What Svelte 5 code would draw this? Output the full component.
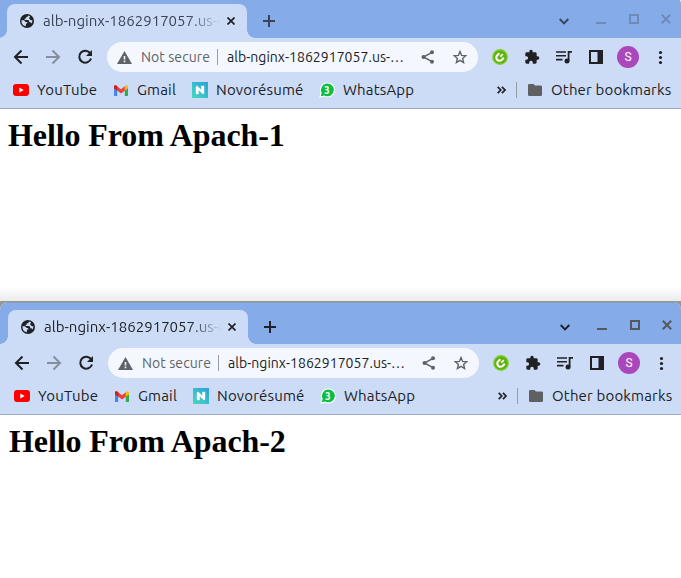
<script>
  const windows = [
    { heading: 'Hello From Apach-1', active: false },
    { heading: 'Hello From Apach-2', active: true }
  ];
</script>

{#snippet browser(w)}
  <section class="window" class:active={w.active}>
    <div class="frame">
      <header class="strip">
        <div class="tab">
          <svg class="globe" width="14" height="14" viewBox="0 0 14 14"><circle cx="7" cy="7" r="7" fill="#202124"/><path d="M8.300 1.600 7 3.200H5.800v1.600H4.600v1.300h3.700l.9 1v1.100h1.300l1 1.300A5.500 5.500 0 0 0 12.400 6.500L10.600 6 9.300 4.700V3.500l.9-1zM1.500 6.300H4l1.700 1.600h1.500v1.700H6l-.2 2.700A5.500 5.500 0 0 1 1.500 6.300z" fill="#ccdcf6"/></svg>
          <span class="title">alb-nginx-1862917057.us-e</span>
          <svg class="tabclose" width="8" height="8" viewBox="0 0 8 8"><path d="M.5.5l7 7m0-7l-7 7" stroke="#202124" stroke-width="1.7"/></svg>
        </div>
        <svg class="plus" width="12" height="12" viewBox="0 0 12 12"><path d="M6 0v12M0 6h12" stroke="currentColor" stroke-width="2"/></svg>
        <svg class="chevron" width="10" height="7" viewBox="0 0 10 7"><path d="M.7 1l4.3 4.3L9.3 1" fill="none" stroke="currentColor" stroke-width="1.9"/></svg>
        <div class="controls">
          <svg width="10" height="12" viewBox="0 0 10 12"><path d="M0 10h10" stroke="currentColor" stroke-width="2"/></svg>
          <svg width="10" height="12" viewBox="0 0 10 12"><path d="M1 2h8v8H1z" fill="none" stroke="currentColor" stroke-width="2"/></svg>
          <svg width="10" height="12" viewBox="0 0 10 12"><path d="M.8 1.8l8.4 8.4m0-8.4L.8 10.2" stroke="currentColor" stroke-width="2"/></svg>
        </div>
      </header>

      <div class="toolbar">
        <svg width="16" height="16" viewBox="0 0 16 16"><path d="M15 8H2m6.500-6.500L2 8l6.500 6.500" fill="none" stroke="#202124" stroke-width="2"/></svg>
        <svg width="16" height="16" viewBox="0 0 16 16"><path d="M1 8h13M7.500 1.500 14 8l-6.500 6.500" fill="none" stroke="#858e9f" stroke-width="2"/></svg>
        <svg width="16" height="16" viewBox="0 0 16 16"><path d="M13.300 4.400A6 6 0 1 0 14 9.500" fill="none" stroke="#202124" stroke-width="2"/><path d="M15 1v6H9z" fill="#202124"/></svg>
        <div class="omnibox">
          <svg class="warn" width="15" height="13" viewBox="0 0 15 13"><path d="M7.500 0 15 13H0z" fill="#5f6368"/><path d="M7.500 5v3.500M7.500 9.500v1.800" stroke="#f4f8fe" stroke-width="1.600"/></svg>
          <span class="secure">Not secure</span>
          <i class="rule"></i>
          <span class="url">alb-nginx-1862917057.us-…</span>
          <svg class="share" width="14" height="14" viewBox="0 0 14 14"><g fill="#5f6368"><circle cx="2.500" cy="7" r="2"/><circle cx="11" cy="2.300" r="2"/><circle cx="11" cy="11.700" r="2"/></g><path d="M11 2.300 2.500 7l8.500 4.700" fill="none" stroke="#5f6368" stroke-width="1.500"/></svg>
          <svg class="star" width="14" height="14" viewBox="0 0 14 14"><path d="M7 1.500l1.600 3.900 4.200.3-3.200 2.700 1 4.100L7 10.300l-3.600 2.200 1-4.100-3.200-2.700 4.200-.3z" fill="none" stroke="#5f6368" stroke-width="1.400"/></svg>
        </div>
        <div class="actions">
          <svg width="16" height="16" viewBox="0 0 16 16"><circle cx="8" cy="8" r="7.900" fill="#7bd02b"/><circle cx="8" cy="8" r="6.600" fill="#5db20c"/><path d="M7.300 4.300 5.300 6.300a3 3 0 0 0 4.300 4.600l2.200-2.200" fill="none" stroke="#fff" stroke-width="2.100"/><path d="M8.300 7.700 10.800 5.200" stroke="#fff" stroke-width="1.800"/></svg>
          <svg width="16" height="16" viewBox="0 0 24 24"><path d="M20.500 11H19V7c0-1.100-.9-2-2-2h-4V3.500a2.500 2.500 0 0 0-5 0V5H4c-1.100 0-2 .9-2 2v3.800h1.500a2.700 2.700 0 0 1 0 5.400H2V20c0 1.100.9 2 2 2h3.800v-1.500a2.700 2.700 0 0 1 5.400 0V22H17c1.100 0 2-.9 2-2v-4h1.500a2.500 2.500 0 0 0 0-5z" fill="#202124"/></svg>
          <svg width="16" height="14" viewBox="0 0 16 14"><path d="M0 2h10M0 5.800h10M0 9.600h6.500" stroke="#202124" stroke-width="1.600"/><path d="M12.600 11V1.800H16" fill="none" stroke="#202124" stroke-width="1.800"/><circle cx="11" cy="11" r="2.500" fill="#202124"/></svg>
          <svg width="16" height="16" viewBox="0 0 16 16"><path d="M1 1h14v14H1z" fill="#202124"/><path d="M3 3h6.500v10H3z" fill="#ccdcf6"/></svg>
          <span class="avatar">S</span>
          <svg width="16" height="16" viewBox="0 0 16 16"><g fill="#202124"><circle cx="8.500" cy="3.500" r="1.600"/><circle cx="8.500" cy="8.500" r="1.600"/><circle cx="8.500" cy="13.500" r="1.600"/></g></svg>
        </div>
      </div>

      <nav class="bookmarks">
        <span class="item yt"><svg width="16" height="12" viewBox="0 0 16 12"><rect width="16" height="12" rx="3" fill="#f00"/><path d="M6.300 3.500v5L10.700 6z" fill="#fff"/></svg><span>YouTube</span></span>
        <span class="item gm"><svg width="14" height="11" viewBox="0 0 14 11"><path d="M0 2v8.300q0 .7.700.7H3.200V4z" fill="#4285f4"/><path d="M14 2v8.300q0 .7-.7.700h-2.500V4z" fill="#34a853"/><path d="M10.800 1.200 12.200.3Q14-.4 14 1.800v1.500l-3.200 2.500z" fill="#fbbc04"/><path d="M0 1.800Q0-.4 1.800.3L7 4.200 10.800 1.200v4.600L7 8.500 0 3.300z" fill="#ea4335"/><path d="M0 1.800Q0-.4 1.800.3L3.200 1.300v4.500L0 3.300z" fill="#c5221f"/></svg><span>Gmail</span></span>
        <span class="item nr"><svg width="16" height="16" viewBox="0 0 16 16"><defs><linearGradient id="nv" x1="0" y1="1" x2="1" y2="0"><stop stop-color="#48d9bd"/><stop offset="1" stop-color="#2c9fdc"/></linearGradient></defs><path d="M0 0h16v16H0z" fill="url(#nv)"/><path d="M4 12V4.500l1.300-.4L9.400 8V4H12v7.500l-1.300.4L6.600 8v4z" fill="#fff" stroke="#fff" stroke-width=".4"/></svg><span>Novorésumé</span></span>
        <span class="item wa"><svg width="16" height="16" viewBox="0 0 16 16"><path d="M.3 15.700 1.500 11A7.500 7.500 0 1 1 5 14.700z" fill="#fff"/><path d="M1.700 14.300l1-3.500A6.400 6.400 0 1 1 5.300 13.500z" fill="#0abf3e"/><text x="8" y="11.800" text-anchor="middle" font-size="10" font-weight="700" fill="#fff">3</text></svg><span>WhatsApp</span></span>
        <div class="rest">
          <svg class="more" width="9" height="8" viewBox="0 0 9 8"><path d="M.7.8 3.800 4 .7 7.200M4.900.8 8 4 4.900 7.200" fill="none" stroke="#202124" stroke-width="1.700"/></svg>
          <i class="rule"></i>
          <svg class="folder" width="14" height="12" viewBox="0 0 14 12"><path d="M1.200 0H5.500L7 1.600h5.800q1.200 0 1.200 1.200v8q0 1.200-1.200 1.200H1.200Q0 12 0 10.800V1.200Q0 0 1.200 0z" fill="#5f6062"/></svg>
          <span class="other">Other bookmarks</span>
        </div>
      </nav>
    </div>
    <main><h1>{w.heading}</h1></main>
  </section>
{/snippet}

<div class="desktop">
  {#each windows as w}
    {@render browser(w)}
  {/each}
</div>

<style>
  :global(body) { margin: 0; background: #fff; overflow: hidden; }
  .desktop { width: 681px; height: 578px; overflow: hidden; background: #969894; font-family: Ubuntu, 'Noto Sans', sans-serif; }
  .window { width: 682px; height: 305px; margin: -4px 0 0 -1px; background: #fff; color: #202124; overflow: hidden; }
  .window.active { margin: 1px 0 0; height: 276px; width: 681px; background: #c4c6c2; border-radius: 8px 8px 0 0; }
  svg { display: block; flex: none; }
  .frame { width: 682px; height: 112px; border-bottom: 1px solid #9daac6; background: #ccdcf6; overflow: hidden; border-radius: 8px 8px 0 0; }
  .strip { box-sizing: border-box; height: 42px; padding: 8px 10px 0 8px; background: #85ace9; display: flex; align-items: center; color: #3a4456; }
  .active .strip { color: #202124; border-top: 1px solid #8299bd; padding-top: 7px; }
  .tab { position: relative; box-sizing: border-box; width: 240px; height: 34px; padding: 0 12px 0 13px; display: flex; align-items: center; background: #ccdcf6; border-radius: 8px 8px 0 0; }
  .tab::before, .tab::after { content: ''; position: absolute; bottom: 0; width: 8px; height: 8px; }
  .tab::before { left: -8px; background: radial-gradient(circle at 0 0, transparent 7.5px, #ccdcf6 8px); }
  .tab::after { right: -8px; background: radial-gradient(circle at 100% 0, transparent 7.5px, #ccdcf6 8px); }
  .title { width: 176px; margin-left: 9px; padding-bottom: 2px; overflow: hidden; white-space: nowrap; font-size: 15px; letter-spacing: .02px; mask-image: linear-gradient(90deg, #000 145px, transparent 178px); }
  .tabclose { margin-left: auto; }
  .plus { margin-left: 16px; }
  .chevron { margin-left: auto; margin-top: 0; }
  .controls { display: flex; gap: 22px; margin: -5px 0 0 28px; color: #6d8ab9; }
  .active .controls { color: #55595f; }
  .controls svg:first-child { margin-right: 1px; margin-left: -1px; }
  .controls svg:last-child { margin-right: 0; }
  .toolbar { height: 38px; display: flex; align-items: center; gap: 16px; padding: 0 0 0 14px; }
  .omnibox { box-sizing: border-box; width: 371px; height: 30px; margin-left: -2px; padding: 0 11px 0 10px; border-radius: 15px; background: #f4f8fe; display: flex; align-items: center; font-size: 14px; white-space: nowrap; }
  .secure { width: 68px; margin-left: 9px; color: #5f6368; letter-spacing: .08px; }
  .rule { width: 1px; height: 16px; background: #989da6; }
  .omnibox .rule { margin: 0 9px 0 8px; }
  .url { width: 178px; letter-spacing: .04px; }
  .share { margin-left: auto; }
  .star { margin-left: 18px; }
  .actions { display: flex; align-items: center; gap: 16px; margin-left: -2px; }
  .avatar { width: 22px; height: 22px; margin: 0 -3px; border-radius: 50%; background: #ab47bc; color: #fff; font: 12px/22px Roboto, sans-serif; text-align: center; }
  .bookmarks { height: 28px; display: flex; align-items: center; padding: 0 9px 0 14px; font-size: 15px; letter-spacing: .17px; white-space: nowrap; }
  .item { display: flex; align-items: center; gap: 8px; }
  .item > span, .other { padding-bottom: 2px; }
  .yt { width: 101px; }
  .item.gm { width: 78px; gap: 9px; }
  .nr { width: 127px; }
  .rest { display: flex; align-items: center; margin-left: auto; }
  .rest .rule { margin: 0 11px 0 10px; }
  .other { width: 121px; margin-left: 9px; }
  main { height: 200px; background: #fff; padding: 8px 9px; }
  h1 { margin: 0; font: bold 32px/37px 'Liberation Serif', serif; letter-spacing: -.1px; color: #000; }
  .window:not(.active) main { box-sizing: border-box; height: 192px; background: linear-gradient(#fff 178px, #ebebeb 192px); }
</style>
